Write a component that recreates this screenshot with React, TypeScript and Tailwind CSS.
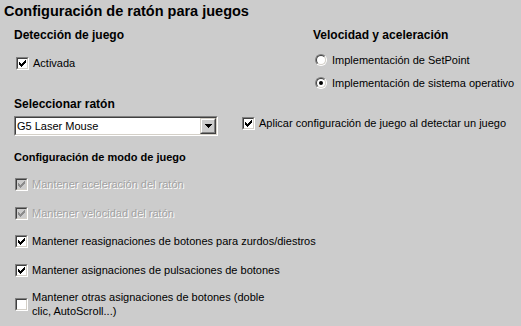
import React from 'react'

const CHECK_PIXELS = [
  [6, 0], [5, 1], [6, 1], [0, 2], [4, 2], [5, 2], [6, 2],
  [0, 3], [1, 3], [3, 3], [4, 3], [5, 3], [0, 4], [1, 4], [2, 4], [3, 4], [4, 4],
  [1, 5], [2, 5], [3, 5], [2, 6],
]

function CheckMark({ color }: { color: string }) {
  return (
    <svg width="7" height="7" viewBox="0 0 7 7" shapeRendering="crispEdges">
      {CHECK_PIXELS.map(([x, y]) => (
        <rect key={`${x}-${y}`} x={x} y={y} width="1" height="1" fill={color} />
      ))}
    </svg>
  )
}

function Box({ checked, disabled }: { checked?: boolean; disabled?: boolean }) {
  return (
    <div className="w-[13px] h-[13px] shrink-0 border border-t-[#808080] border-l-[#808080] border-b-white border-r-white">
      <div
        className={`w-full h-full flex items-center justify-center border border-t-[#404040] border-l-[#404040] border-b-[#d4d0c8] border-r-[#d4d0c8] ${disabled ? 'bg-[#cccccc]' : 'bg-white'}`}
      >
        {checked && <CheckMark color={disabled ? '#8c8c8c' : '#000000'} />}
      </div>
    </div>
  )
}

function Check({ label, checked, disabled }: { label: string; checked?: boolean; disabled?: boolean }) {
  return (
    <div className="flex items-center gap-[4px]">
      <Box checked={checked} disabled={disabled} />
      <span
        className={`leading-[13px] ${disabled ? 'text-[#a3a3a3] [text-shadow:1px_1px_0_#ffffff]' : 'text-black'}`}
      >
        {label}
      </span>
    </div>
  )
}

function Radio({ label, checked }: { label: string; checked?: boolean }) {
  return (
    <div className="flex items-center gap-[5px] h-[12px]">
      <div className="w-[12px] h-[12px] rounded-full border border-t-[#808080] border-l-[#808080] border-b-white border-r-white">
        <div className="w-full h-full rounded-full flex items-center justify-center bg-white border border-t-[#404040] border-l-[#404040] border-b-[#d4d0c8] border-r-[#d4d0c8]">
          {checked && <div className="w-[4px] h-[4px] rounded-full bg-black" />}
        </div>
      </div>
      <span className="leading-[13px]">{label}</span>
    </div>
  )
}

function Combo({ value }: { value: string }) {
  return (
    <div className="w-[204px] h-[20px] border border-t-[#808080] border-l-[#808080] border-b-white border-r-white">
      <div className="w-full h-full flex items-center bg-white border border-t-[#404040] border-l-[#404040] border-b-[#d4d0c8] border-r-[#d4d0c8]">
        <span className="flex-1 pl-[1px] leading-[13px]">{value}</span>
        <div className="w-[16px] h-[16px] border border-t-[#d4d0c8] border-l-[#d4d0c8] border-b-[#404040] border-r-[#404040]">
          <div className="w-full h-full flex items-center justify-center bg-[#cccccc] border border-t-white border-l-white border-b-[#808080] border-r-[#808080]">
            <svg width="7" height="4" viewBox="0 0 7 4" shapeRendering="crispEdges">
              <path d="M0 0h7v1H0zM1 1h5v1H1zM2 2h3v1H2zM3 3h1v1H3z" fill="#000" />
            </svg>
          </div>
        </div>
      </div>
    </div>
  )
}

export default function App() {
  return (
    <div className="w-[521px] h-[326px] overflow-hidden bg-[#cccccc] text-black text-[11px] font-['Liberation_Sans',Arial,sans-serif]">
      <div className="pl-[4px] pt-[2px] text-[14.5px] font-bold leading-[18px]">
        Configuración de ratón para juegos
      </div>

      {/* Detección / Velocidad */}
      <div className="flex items-start mt-[7px]">
        <div className="w-[313px] pl-[14px]">
          <div className="text-[12px] font-bold leading-[16px]">Detección de juego</div>
          <div className="mt-[14px] pl-[2px]">
            <Check label="Activada" checked />
          </div>
        </div>
        <div>
          <div className="text-[12px] font-bold leading-[16px]">Velocidad y aceleración</div>
          <div className="mt-[11px] pl-[2px] flex flex-col gap-[11px]">
            <Radio label="Implementación de SetPoint" />
            <Radio label="Implementación de sistema operativo" checked />
          </div>
        </div>
      </div>

      {/* Seleccionar ratón */}
      <div className="flex items-end mt-[7px] pl-[14px]">
        <div>
          <div className="text-[12px] font-bold leading-[16px]">Seleccionar ratón</div>
          <div className="mt-[4px]">
            <Combo value="G5 Laser Mouse" />
          </div>
        </div>
        <div className="ml-[24px] mb-[6px]">
          <Check label="Aplicar configuración de juego al detectar un juego" checked />
        </div>
      </div>

      {/* Modo de juego */}
      <div className="pl-[14px] mt-[13px]">
        <div className="text-[11px] font-bold leading-[16px]">Configuración de modo de juego</div>
        <div className="mt-[13px] pl-[1px] flex flex-col">
          <Check label="Mantener aceleración del ratón" checked disabled />
          <div className="mt-[16px]">
            <Check label="Mantener velocidad del ratón" checked disabled />
          </div>
          <div className="mt-[15px]">
            <Check label="Mantener reasignaciones de botones para zurdos/diestros" checked />
          </div>
          <div className="mt-[16px]">
            <Check label="Mantener asignaciones de pulsaciones de botones" checked />
          </div>
          <div className="mt-[13px] w-[270px]">
            <div className="flex items-center gap-[4px]">
              <Box />
              <span className="leading-[14px]">
                Mantener otras asignaciones de botones (doble clic, AutoScroll...)
              </span>
            </div>
          </div>
        </div>
      </div>
    </div>
  )
}
